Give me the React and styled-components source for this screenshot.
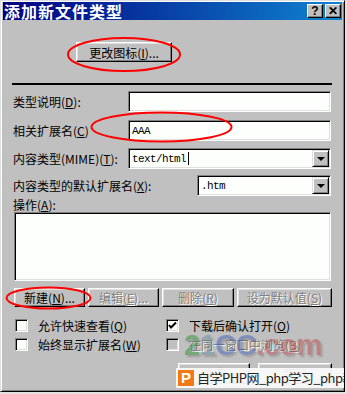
import React from 'react';
import styled, { createGlobalStyle } from 'styled-components';

const Global = createGlobalStyle`
  html, body { margin: 0; padding: 0; background: #e2e2e2; }
  body { font-family: "Noto Sans CJK SC", "Noto Sans", sans-serif; font-size: 12px; color: #000; }
`;

const Window = styled.div`
  position: relative;
  width: 345px;
  height: 392px;
  box-sizing: border-box;
  background: #c0c0c0;
  border: 1px solid;
  border-color: #dfdfdf #000 #000 #dfdfdf;
  box-shadow: inset 1px 1px #fff, inset -1px -1px #808080;
  padding: 1px 2px 2px 2px;
  display: flex;
  flex-direction: column;
  overflow: hidden;
`;

const TitleBar = styled.div`
  height: 18px;
  flex: none;
  background: linear-gradient(to right, #000080, #1084d0);
  display: flex;
  align-items: center;
  justify-content: space-between;
  padding: 0 1px 0 1px;
`;

const TitleText = styled.div`
  color: #fff;
  font-weight: bold;
  font-size: 16px;
  letter-spacing: 1px;
  line-height: 18px;
  white-space: nowrap;
`;

const TitleButtons = styled.div`
  display: flex;
  gap: 2px;
`;

const TitleButton = styled.div`
  width: 16px;
  height: 14px;
  box-sizing: border-box;
  background: #c0c0c0;
  border: 1px solid;
  border-color: #fff #000 #000 #fff;
  box-shadow: inset -1px -1px #808080;
  display: flex;
  align-items: center;
  justify-content: center;
  font-family: "Liberation Sans", sans-serif;
  font-weight: bold;
  font-size: 12px;
  line-height: 1;
`;

const Body = styled.div`
  display: flex;
  flex-direction: column;
  padding: 0 10px;
`;

const IconRow = styled.div`
  margin-top: 22px;
  padding-left: 63px;
  display: flex;
`;

const Button = styled.div`
  width: ${p => p.$w}px;
  height: ${p => p.$h || 20}px;
  box-sizing: border-box;
  background: #c0c0c0;
  border: 1px solid;
  border-color: #fff #000 #000 #fff;
  box-shadow: inset -1px -1px #808080, inset 1px 1px #dfdfdf;
  display: flex;
  align-items: center;
  justify-content: center;
  font-size: 12px;
  white-space: nowrap;
  color: ${p => (p.$disabled ? '#808080' : '#000')};
  text-shadow: ${p => (p.$disabled ? '1px 1px 0 #fff' : 'none')};
`;

const Separator = styled.div`
  margin-top: 21px;
  margin-left: -1px;
  height: 2px;
  background: #000;
`;

const FieldRow = styled.div`
  display: grid;
  grid-template-columns: ${p => p.$label}px ${p => p.$field}px;
  align-items: center;
  margin-top: ${p => p.$mt}px;
`;

const Label = styled.div`
  font-size: 12px;
  line-height: 14px;
  white-space: nowrap;
  color: ${p => (p.$disabled ? '#808080' : '#000')};
  text-shadow: ${p => (p.$disabled ? '1px 1px 0 #fff' : 'none')};
  margin-top: ${p => p.$mt || 0}px;
`;

const Sunken = styled.div`
  height: ${p => p.$h || 21}px;
  box-sizing: border-box;
  background: #fcfffc;
  border: 1px solid;
  border-color: #808080 #fff #fff #808080;
  box-shadow: inset 1px 1px #000, inset -1px -1px #dfdfdf;
  display: flex;
  align-items: center;
  padding: 0 2px 0 3px;
`;

const ListBox = styled(Sunken)`
  margin-left: 1px;
  width: 317px;
`;

const MonoText = styled.span`
  font-family: "Liberation Mono", monospace;
  font-size: 11px;
  letter-spacing: -0.6px;
  flex: 1;
  display: flex;
  align-items: center;
`;

const Caret = styled.span`
  display: inline-block;
  width: 1px;
  height: 13px;
  background: #000;
  margin-left: 2px;
`;

const DropButton = styled.div`
  width: 17px;
  height: 17px;
  box-sizing: border-box;
  background: #c0c0c0;
  border: 1px solid;
  border-color: #dfdfdf #000 #000 #dfdfdf;
  box-shadow: inset 1px 1px #fff, inset -1px -1px #808080;
  display: flex;
  align-items: center;
  justify-content: center;
  margin-right: -1px;
`;

const Arrow = styled.div`
  width: 0;
  height: 0;
  border-left: 4px solid transparent;
  border-right: 4px solid transparent;
  border-top: 4px solid #000;
`;

const ButtonRow = styled.div`
  display: grid;
  grid-template-columns: 71px 71px 72px 95px;
  column-gap: 3px;
  margin-top: 7px;
  margin-left: 1px;
`;

const CheckGrid = styled.div`
  display: grid;
  grid-template-columns: 151px 1fr;
  row-gap: 6px;
  margin-top: 12px;
  margin-left: 2px;
`;

const CheckItem = styled.div`
  display: flex;
  align-items: center;
  gap: 10px;
  height: 13px;
`;

const Box = styled.div`
  width: 13px;
  height: 13px;
  box-sizing: border-box;
  background: ${p => (p.$disabled ? '#c0c0c0' : '#fcfffc')};
  border: 1px solid;
  border-color: #808080 #fff #fff #808080;
  box-shadow: inset 1px 1px #000, inset -1px -1px #dfdfdf;
  display: flex;
  align-items: center;
  justify-content: center;
`;

const FooterRow = styled.div`
  display: flex;
  justify-content: flex-end;
  gap: 8px;
  margin-top: 12px;
`;

const Annotations = styled.svg`
  position: absolute;
  left: -1px;
  top: -1px;
  width: 345px;
  height: 392px;
  pointer-events: none;
`;

const SiteMark = styled.div`
  position: absolute;
  left: 183px;
  top: 329px;
  font-family: "Liberation Sans", sans-serif;
  font-weight: bold;
  font-size: 29px;
  letter-spacing: -0.5px;
  line-height: 30px;
  opacity: 0.5;
  filter: blur(0.7px);
  text-shadow: 2px 2px 2px rgba(0, 0, 0, 0.35);
  pointer-events: none;
  white-space: nowrap;
`;

const MarkPart = styled.span`
  color: ${p => p.$c};
`;

const Badge = styled.div`
  position: absolute;
  left: 175px;
  top: 367px;
  width: 168px;
  height: 20px;
  background: rgba(250, 250, 250, 0.95);
  display: flex;
  align-items: center;
  padding-left: 2px;
  box-sizing: border-box;
  overflow: hidden;
`;

const BadgeLogo = styled.div`
  width: 16px;
  height: 16px;
  flex: none;
  background: #f07a18;
  color: #fff;
  font-family: "Liberation Sans", sans-serif;
  font-weight: bold;
  font-size: 15px;
  line-height: 16px;
  display: flex;
  align-items: center;
  justify-content: center;
`;

const BadgeText = styled.div`
  margin-left: 3px;
  font-size: 13px;
  letter-spacing: -0.5px;
  line-height: 18px;
  color: #222;
  white-space: nowrap;
`;

const M = ({ k }) => (
  <>
    (<u>{k}</u>)
  </>
);

function Check() {
  return (
    <svg width="9" height="9" viewBox="0 0 9 9">
      <polyline points="1,4 3,6.5 8,1.5" fill="none" stroke="#000" strokeWidth="2" />
    </svg>
  );
}

export default function App() {
  return (
    <>
      <Global />
      <Window>
        <TitleBar>
          <TitleText>添加新文件类型</TitleText>
          <TitleButtons>
            <TitleButton>?</TitleButton>
            <TitleButton>✕</TitleButton>
          </TitleButtons>
        </TitleBar>
        <Body>
          <IconRow>
            <Button $w={96}>更改图标<M k="I" />...</Button>
          </IconRow>
          <Separator />
          <FieldRow $label={115} $field={203} $mt={6}>
            <Label>类型说明<M k="D" />:</Label>
            <Sunken />
          </FieldRow>
          <FieldRow $label={115} $field={203} $mt={8}>
            <Label>相关扩展名<M k="C" /></Label>
            <Sunken>
              <MonoText>AAA</MonoText>
            </Sunken>
          </FieldRow>
          <FieldRow $label={115} $field={203} $mt={7}>
            <Label>内容类型(MIME)<M k="T" />:</Label>
            <Sunken>
              <MonoText>
                text/html<Caret />
              </MonoText>
              <DropButton>
                <Arrow />
              </DropButton>
            </Sunken>
          </FieldRow>
          <FieldRow $label={184} $field={134} $mt={6}>
            <Label>内容类型的默认扩展名<M k="X" />:</Label>
            <Sunken>
              <MonoText>.htm</MonoText>
              <DropButton>
                <Arrow />
              </DropButton>
            </Sunken>
          </FieldRow>
          <Label $mt={2}>操作<M k="A" />:</Label>
          <ListBox $h={69} />
          <ButtonRow>
            <Button $w={71} $h={19}>新建<M k="N" />...</Button>
            <Button $w={71} $h={19} $disabled>编辑<M k="E" />...</Button>
            <Button $w={72} $h={19} $disabled>删除<M k="R" /></Button>
            <Button $w={95} $h={19} $disabled>设为默认值<M k="S" /></Button>
          </ButtonRow>
          <CheckGrid>
            <CheckItem>
              <Box />
              <Label>允许快速查看<M k="Q" /></Label>
            </CheckItem>
            <CheckItem>
              <Box>
                <Check />
              </Box>
              <Label>下载后确认打开<M k="O" /></Label>
            </CheckItem>
            <CheckItem>
              <Box />
              <Label>始终显示扩展名<M k="W" /></Label>
            </CheckItem>
            <CheckItem>
              <Box $disabled />
              <Label $disabled>在同一窗口中浏览<M k="B" /></Label>
            </CheckItem>
          </CheckGrid>
          <FooterRow>
            <Button $w={72} $h={21}>确定</Button>
            <Button $w={74} $h={21}>取消</Button>
          </FooterRow>
        </Body>
        <SiteMark>
          <MarkPart $c="#2f8f2f">2</MarkPart>
          <MarkPart $c="#6a8a9a">1</MarkPart>
          <MarkPart $c="#3d5fb5">CC</MarkPart>
          <MarkPart $c="#b84848">.com</MarkPart>
        </SiteMark>
        <Annotations viewBox="0 0 345 392">
          <ellipse cx="124" cy="54.5" rx="56" ry="16.5" fill="none" stroke="#f00" strokeWidth="2" />
          <ellipse cx="161.5" cy="127" rx="70" ry="14.5" fill="none" stroke="#f00" strokeWidth="2" />
          <ellipse cx="48.5" cy="298" rx="42" ry="10.5" fill="none" stroke="#f00" strokeWidth="2" />
        </Annotations>
        <Badge>
          <BadgeLogo>P</BadgeLogo>
          <BadgeText>自学PHP网_php学习_php教程</BadgeText>
        </Badge>
      </Window>
    </>
  );
}
